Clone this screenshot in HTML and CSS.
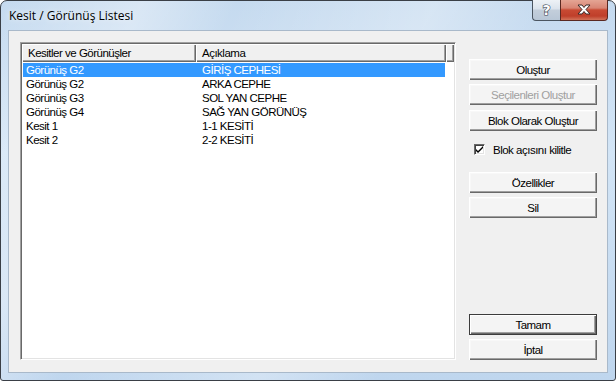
FILE: index.html
```html
<!DOCTYPE html>
<html lang="tr">
<head>
    <meta charset="UTF-8">
    <title>Kesit / Görünüş Listesi</title>
    <link rel="stylesheet" href="styles.css">
</head>
<body>
    <div class="window">
        <div class="titlebar">
            <span class="title">Kesit / Görünüş Listesi</span>
            <div class="caption">
                <div class="cap-btn help">
                    <svg width="27" height="20" viewBox="0 0 27 20">
                        <text x="13.5" y="15" text-anchor="middle" class="glyph">?</text>
                    </svg>
                </div>
                <div class="cap-btn close">
                    <svg width="46" height="20" viewBox="0 0 46 20">
                        <path d="M17 5 h4 l2 2.5 l2 -2.5 h4 l-4 4.5 l4 4.5 h-4 l-2 -2.5 l-2 2.5 h-4 l4 -4.5 z" class="xmark"/>
                    </svg>
                </div>
            </div>
        </div>

        <div class="client">
            <div class="listbox">
                <div class="header">
                    <div class="hcell col1">Kesitler ve Görünüşler</div>
                    <div class="hcell col2">Açıklama</div>
                    <div class="hcell filler"></div>
                </div>
                <div class="rows">
                    <div class="row selected"><span class="c1">Görünüş G2</span><span class="c2">GİRİŞ CEPHESİ</span></div>
                    <div class="row"><span class="c1">Görünüş G2</span><span class="c2">ARKA CEPHE</span></div>
                    <div class="row"><span class="c1">Görünüş G3</span><span class="c2">SOL YAN CEPHE</span></div>
                    <div class="row"><span class="c1">Görünüş G4</span><span class="c2">SAĞ YAN GÖRÜNÜŞ</span></div>
                    <div class="row"><span class="c1">Kesit 1</span><span class="c2">1-1 KESİTİ</span></div>
                    <div class="row"><span class="c1">Kesit 2</span><span class="c2">2-2 KESİTİ</span></div>
                </div>
            </div>

            <div class="side">
                <button class="btn first">Oluştur</button>
                <button class="btn disabled">Seçilenleri Oluştur</button>
                <button class="btn wide-gap">Blok Olarak Oluştur</button>
                <label class="check">
                    <span class="box">
                        <svg width="9" height="9" viewBox="0 0 9 9">
                            <path d="M1 4 l2 2 l5 -5 v2 l-5 5 l-2 -2 z" fill="#000"/>
                        </svg>
                    </span>
                    Blok açısını kilitle
                </label>
                <button class="btn after-check">Özellikler</button>
                <button class="btn">Sil</button>
                <button class="btn default push">Tamam</button>
                <button class="btn">İptal</button>
            </div>
        </div>
    </div>
</body>
</html>
```

FILE: styles.css
```css
body {
    margin: 0;
    padding: 0;
    background: #ffffff;
}

.window {
    width: 616px;
    height: 381px;
    box-sizing: border-box;
    border: 1px solid #3a3f46;
    border-radius: 7px 7px 3px 3px;
    padding: 0 7px 7px 7px;
    display: flex;
    flex-direction: column;
    background:
        linear-gradient(115deg, rgba(255,255,255,0) 0%, rgba(255,255,255,0.35) 18%, rgba(255,255,255,0) 30%, rgba(255,255,255,0.3) 55%, rgba(255,255,255,0) 70%),
        linear-gradient(to bottom, #c5daef, #d3e5f6 40%, #bfd6ee);
}

.titlebar {
    height: 29px;
    display: flex;
    justify-content: space-between;
    align-items: flex-start;
}

.title {
    font-family: "Open Sans", "Noto Sans", sans-serif;
    font-size: 12px;
    color: #000;
    margin-left: 1px;
    margin-top: 6px;
    text-shadow: 0 0 6px rgba(255,255,255,0.9);
}

.caption {
    display: flex;
    margin-top: -1px;
}

.cap-btn {
    height: 20px;
    border: 1px solid #4b5560;
    border-top: none;
    display: flex;
}

.help {
    width: 27px;
    border-radius: 0 0 0 4px;
    border-right: none;
    background: linear-gradient(to bottom, #eef2f6 0%, #dbe3ec 45%, #c3cedb 50%, #b8c6d6 100%);
}

.close {
    width: 46px;
    border-radius: 0 0 4px 0;
    border-color: #5a2820;
    background: linear-gradient(to bottom, #e4a594 0%, #d88574 40%, #c84a33 50%, #bf3f2a 80%, #d2735a 100%);
}

.glyph {
    font-family: "DejaVu Sans", sans-serif;
    font-weight: bold;
    font-size: 14px;
    fill: #ffffff;
    stroke: #3b4450;
    stroke-width: 1.2px;
    paint-order: stroke;
}

.xmark {
    fill: #ffffff;
    stroke: #3a2a28;
    stroke-width: 1;
}

.client {
    flex: 1;
    background: #f0f0f0;
    border: 1px solid #a9b9ca;
    padding: 11px 9px 12px 11px;
    display: flex;
    gap: 13px;
}

.listbox {
    width: 436px;
    box-sizing: border-box;
    background: #ffffff;
    border: 1px solid;
    border-color: #a0a0a0 #ffffff #ffffff #a0a0a0;
    box-shadow: inset 1px 1px #696969, inset -1px -1px #e3e3e3;
    padding: 1px;
    font-family: "Liberation Sans", Arial, sans-serif;
    font-size: 11.5px;
    letter-spacing: -0.5px;
    color: #000;
}

.header {
    display: flex;
    height: 18px;
}

.hcell {
    box-sizing: border-box;
    height: 18px;
    background: #f0f0f0;
    box-shadow: inset 1px 1px #ffffff, inset -1px -1px #696969, inset -2px -2px #a0a0a0;
    padding-left: 6px;
    line-height: 18px;
}

.col1 {
    width: 174px;
}

.col2 {
    width: 250px;
}

.filler {
    flex: 1;
}

.rows {
    padding: 1px 0 0 1px;
}

.row {
    width: 422px;
    height: 14px;
    line-height: 14px;
    display: flex;
}

.row.selected {
    background: #3399ff;
    color: #ffffff;
}

.c1 {
    width: 176px;
    padding-left: 3px;
}

.side {
    width: 128px;
    display: flex;
    flex-direction: column;
}

.btn {
    height: 21px;
    width: 128px;
    margin: 4px 0 0 0;
    padding: 0;
    font-family: "Liberation Sans", Arial, sans-serif;
    font-size: 11.5px;
    letter-spacing: -0.5px;
    color: #000;
    background: #f4f4f4;
    border: none;
    box-shadow: inset 1px 1px #ffffff, inset -1px -1px #696969, inset -2px -2px #a0a0a0, inset 2px 2px #f8f8f8;
}

.btn.first {
    margin-top: 17px;
}

.btn.wide-gap {
    margin-top: 5px;
}

.btn.disabled {
    color: #a0a0a0;
}

.btn.after-check {
    margin-top: 16px;
}

.btn.default {
    box-shadow: inset 0 0 0 1px #3c3c3c, inset 2px 2px #ffffff, inset -2px -2px #696969, inset -3px -3px #a0a0a0;
}

.btn.push {
    margin-top: auto;
}

.check {
    margin-top: 12px;
    height: 13px;
    display: flex;
    align-items: center;
    gap: 8px;
    padding-left: 5px;
    font-family: "Liberation Sans", Arial, sans-serif;
    font-size: 11.5px;
    letter-spacing: -0.5px;
    color: #000;
}

.box {
    width: 11px;
    height: 11px;
    box-sizing: border-box;
    background: #ffffff;
    border: 1px solid;
    border-color: #696969 #ffffff #ffffff #696969;
    box-shadow: inset 1px 1px #404040, inset -1px -1px #e3e3e3;
    display: flex;
    align-items: center;
    justify-content: center;
}
```
